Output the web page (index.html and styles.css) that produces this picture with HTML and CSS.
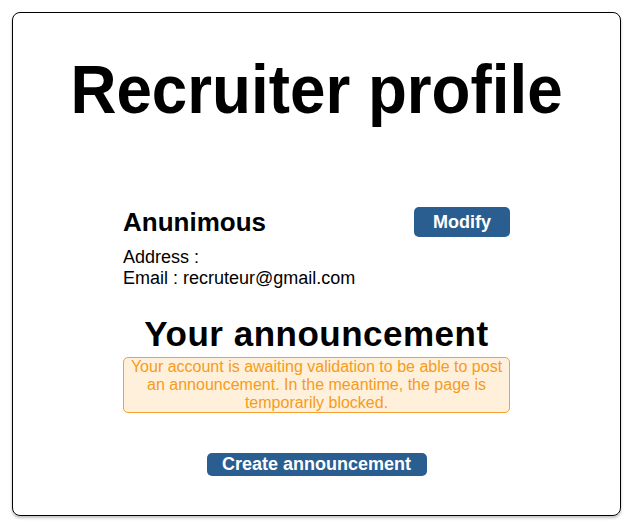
FILE: index.html
```html
<!DOCTYPE html>
<html>
<head>
<meta charset="utf-8">
<link rel="stylesheet" href="styles.css">
</head>
<body>
<div class="card">
  <h1 class="title">Recruiter profile</h1>
  <div class="content">
    <div class="profile-head">
      <h2 class="name">Anunimous</h2>
      <button class="btn btn-modify">Modify</button>
    </div>
    <p class="info">Address :<br>Email : recruteur@gmail.com</p>
    <h2 class="section-title">Your announcement</h2>
    <div class="alert">Your account is awaiting validation to be able to post an announcement. In the meantime, the page is temporarily blocked.</div>
    <div class="actions">
      <button class="btn btn-create">Create announcement</button>
    </div>
  </div>
</div>
</body>
</html>
```
FILE: styles.css
```css
html, body {
  margin: 0;
  padding: 0;
  background: #fff;
}
body {
  padding: 12px;
  font-family: "Liberation Sans", Arial, sans-serif;
  color: #000;
}
.card {
  border: 1px solid #000;
  border-radius: 8px;
  box-shadow: 0 2px 3px rgba(0,0,0,0.25);
  height: 504px;
  box-sizing: border-box;
  padding-top: 37px;
}
.title {
  margin: 0;
  text-align: center;
  font-size: 68px;
  font-weight: bold;
  line-height: 78px;
  transform: scaleX(0.937);
}
.content {
  width: 387px;
  margin: 79px auto 0;
}
.profile-head {
  display: flex;
  justify-content: space-between;
  align-items: center;
  height: 30px;
}
.name {
  margin: 0;
  font-size: 26px;
  font-weight: bold;
  line-height: 30px;
}
.btn {
  background: #2a5d90;
  color: #fff;
  border: none;
  border-radius: 5px;
  font-family: "Liberation Sans", Arial, sans-serif;
  font-weight: bold;
  font-size: 18px;
  cursor: pointer;
}
.btn-modify {
  width: 96px;
  height: 30px;
  padding: 0;
}
.info {
  margin: 10px 0 0;
  font-size: 18px;
  line-height: 21px;
}
.section-title {
  margin: 25px 0 0;
  text-align: center;
  font-size: 35px;
  line-height: 40px;
  letter-spacing: 0.5px;
}
.alert {
  margin-top: 3px;
  border: 1px solid #f5a030;
  background: #fff0dc;
  color: #f59c1a;
  border-radius: 5px;
  text-align: center;
  font-size: 16px;
  line-height: 18px;
  padding: 0 4px;
}
.actions {
  display: flex;
  justify-content: center;
  margin-top: 40px;
}
.btn-create {
  width: 220px;
  height: 23px;
  padding: 0;
}
```
